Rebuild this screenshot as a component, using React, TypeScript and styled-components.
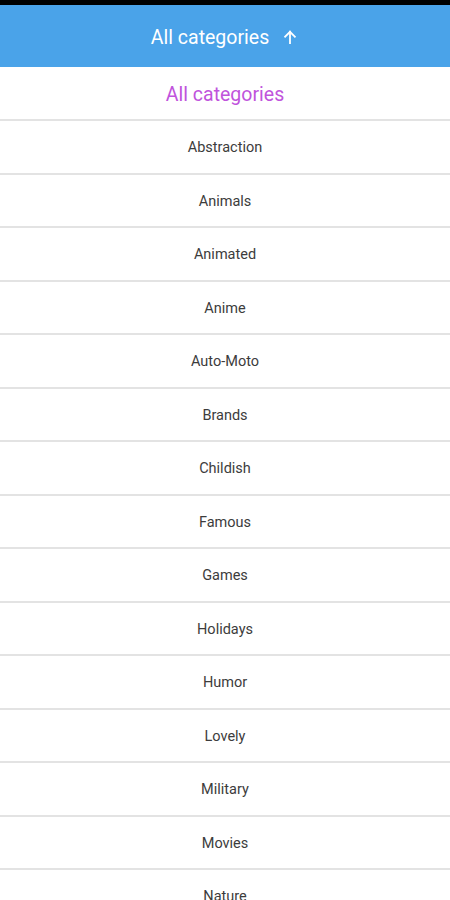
import styled, { createGlobalStyle } from 'styled-components';

const GlobalStyle = createGlobalStyle`
  html, body {
    margin: 0;
    padding: 0;
    background: #fff;
    font-family: Roboto, "Noto Sans", sans-serif;
  }
`;

const categories = [
  'Abstraction', 'Animals', 'Animated', 'Anime', 'Auto-Moto', 'Brands', 'Childish',
  'Famous', 'Games', 'Holidays', 'Humor', 'Lovely', 'Military', 'Movies', 'Nature',
];

const Screen = styled.div`
  width: 450px;
  height: 900px;
  overflow: hidden;
  display: flex;
  flex-direction: column;
`;

const StatusBar = styled.div`
  height: 5px;
  background: #000;
  flex-shrink: 0;
`;

const Header = styled.div`
  height: 62px;
  flex-shrink: 0;
  background: #4aa3e9;
  display: flex;
  align-items: center;
  justify-content: center;
  gap: 12px;
  color: #fff;
  font-size: 19.5px;
  padding-top: 2px;
  box-sizing: border-box;
`;

const List = styled.div`
  display: flex;
  flex-direction: column;
`;

// active row is the selected "All categories" entry
const Row = styled.div<{ $active?: boolean }>`
  height: ${p => (p.$active ? '50px' : '49.5px')};
  flex-shrink: 0;
  display: flex;
  align-items: center;
  justify-content: center;
  border-bottom: 2px solid #e3e3e3;
  color: ${p => (p.$active ? '#c054dc' : '#3c3c3c')};
  font-size: ${p => (p.$active ? '19.5px' : '14.5px')};
  padding-top: 2px;
  box-sizing: content-box;
`;

const ArrowUp = () => (
  <svg width="18" height="18" viewBox="0 0 24 24" fill="none" stroke="#fff" strokeWidth="2.4" strokeLinecap="square">
    <path d="M12 20V5" />
    <path d="M5.5 11.5L12 5l6.5 6.5" />
  </svg>
);

const App = () => (
  <>
    <GlobalStyle />
    <Screen>
      <StatusBar />
      <Header>
        <span>All categories</span>
        <ArrowUp />
      </Header>
      <List>
        <Row $active>All categories</Row>
        {categories.map(name => (
          <Row key={name}>{name}</Row>
        ))}
      </List>
    </Screen>
  </>
);

export default App;
